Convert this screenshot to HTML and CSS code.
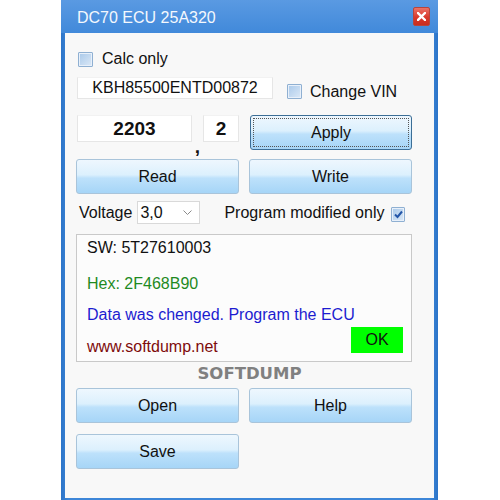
FILE: index.html
```html
<!DOCTYPE html>
<html lang="en">

<head>
    <meta charset="UTF-8">
    <meta name="viewport" content="width=device-width, initial-scale=1.0">
    <title>DC70 ECU 25A320</title>
    <link rel="stylesheet" href="styles.css">
</head>

<body>
    <div class="window">
        <div class="titlebar">
            <span class="title">DC70 ECU 25A320</span>
            <span class="close">
                <svg width="9" height="9" viewBox="0 0 9 9">
                    <path d="M1 1 L8 8 M8 1 L1 8" stroke="#fff" stroke-width="2.4" stroke-linecap="square" />
                </svg>
            </span>
        </div>

        <div class="client">
            <div class="row row-calc">
                <span class="check"></span>
                <span>Calc only</span>
            </div>

            <div class="row row-vin">
                <div class="field field-vin">KBH85500ENTD00872</div>
                <div class="vin-check">
                    <span class="check"></span>
                    <span>Change VIN</span>
                </div>
            </div>

            <div class="row row-code">
                <div class="field field-code">2203</div>
                <span class="comma">,</span>
                <div class="field field-sub">2</div>
                <button class="btn btn-apply">Apply</button>
            </div>

            <div class="row row-btns">
                <button class="btn">Read</button>
                <button class="btn">Write</button>
            </div>

            <div class="row row-volt">
                <span class="volt-label">Voltage</span>
                <div class="combo">
                    <span>3,0</span>
                    <svg width="9" height="5" viewBox="0 0 9 5">
                        <path d="M0.5 0.5 L4.5 4.5 L8.5 0.5" fill="none" stroke="#8a8a8a" stroke-width="1" />
                    </svg>
                </div>
                <span class="mod-label">Program modified only</span>
                <span class="check checked">
                    <svg width="11" height="11" viewBox="0 0 11 11">
                        <path d="M2 5.5 L4.5 8 L9 2.5" fill="none" stroke="#2456a8" stroke-width="2" />
                    </svg>
                </span>
            </div>

            <div class="info">
                <div class="line line-sw">SW: 5T27610003</div>
                <div class="line line-hex">Hex: 2F468B90</div>
                <div class="line line-msg">Data was chenged. Program the ECU</div>
                <div class="line-last">
                    <span class="site">www.softdump.net</span>
                    <span class="ok">OK</span>
                </div>
            </div>

            <div class="brand">SOFTDUMP</div>

            <div class="row row-btns row-open">
                <button class="btn">Open</button>
                <button class="btn">Help</button>
            </div>

            <div class="row row-btns row-save">
                <button class="btn">Save</button>
            </div>
        </div>
    </div>
</body>

</html>
```

FILE: styles.css
```css
body {
    margin: 0;
    background-color: #FFF;
    font-family: "Liberation Sans", Arial, sans-serif;
    font-size: 16px;
    color: #111;
}

.window {
    margin-left: 61px;
    width: 377px;
    height: 500px;
    display: flex;
    flex-direction: column;
    background: linear-gradient(to right, #2c74c8, #3d86d8 2%, #3d86d8 98%, #2c74c8);
}

.titlebar {
    height: 33px;
    display: flex;
    align-items: center;
    justify-content: space-between;
    padding: 0 8px 0 16px;
    background: linear-gradient(#5a9ae2, #4189da);
}

.title {
    color: #F4F8FD;
    font-size: 16px;
    padding-top: 2px;
}

.close {
    width: 17px;
    height: 19px;
    display: flex;
    align-items: center;
    justify-content: center;
    border-radius: 2px;
    border: 1px solid #b8453c;
    box-sizing: border-box;
    background: linear-gradient(#eb7367, #d8392b 55%, #c92d20);
}

.client {
    flex: 1;
    margin: 0 4px 2px 4px;
    padding-left: 11px;
    background-color: #F8F8F8;
}

.row {
    display: flex;
    align-items: center;
}

.check {
    width: 15px;
    height: 15px;
    box-sizing: border-box;
    border: 1px solid #8fb0d2;
    border-radius: 1px;
    background: linear-gradient(135deg, #a9c9ea, #dce9f7);
    box-shadow: inset 0 0 0 1px #e8f0fa;
    display: inline-flex;
    align-items: center;
    justify-content: center;
    flex-shrink: 0;
}

.row-calc {
    margin-top: 15px;
    height: 22px;
    gap: 9px;
    padding-left: 2px;
}

.row-vin {
    margin-top: 7px;
    height: 22px;
}

.field {
    background-color: #FFF;
    border: 1px solid #E6E6E6;
    border-top-color: #F2F2F2;
    box-sizing: border-box;
    display: flex;
    align-items: center;
    justify-content: center;
}

.field-vin {
    margin-left: 1px;
    width: 196px;
    height: 22px;
}

.vin-check {
    display: flex;
    align-items: center;
    gap: 8px;
    margin-left: 14px;
    margin-top: 7px;
}

.row-code {
    margin-top: 16px;
    height: 35px;
    align-items: flex-start;
}

.field-code,
.field-sub {
    height: 27px;
    font-weight: bold;
    font-size: 19px;
}

.field-code {
    margin-left: 1px;
    width: 115px;
}

.field-sub {
    width: 36px;
}

.comma {
    width: 11px;
    font-weight: bold;
    font-size: 19px;
    line-height: 19px;
    margin-top: 22px;
    text-align: center;
}

.btn {
    font: inherit;
    color: #111;
    width: 163px;
    height: 35px;
    padding: 0;
    border: 1px solid #a9c4da;
    border-radius: 3px;
    background: linear-gradient(#eef7fe, #dcf0fd 45%, #bde1fb 55%, #a6d5f7);
    cursor: pointer;
}

.btn-apply {
    margin-left: 11px;
    width: 162px;
    border-color: #3c6e96;
    outline: 1px dotted #555;
    outline-offset: -4px;
}

.row-btns {
    gap: 10px;
}

.row-btns:nth-child(4) {
    margin-top: 9px;
}

.row-volt {
    margin-top: 7px;
    height: 23px;
}

.volt-label {
    margin-left: 3px;
}

.combo {
    margin-left: 5px;
    width: 63px;
    height: 23px;
    box-sizing: border-box;
    border: 1px solid #d9d9d9;
    background-color: #FFF;
    display: flex;
    align-items: center;
    justify-content: space-between;
    padding: 0 7px 0 2px;
}

.mod-label {
    margin-left: 24px;
}

.check.checked {
    margin-left: 7px;
    width: 14px;
    height: 15px;
    margin-top: 4px;
}

.info {
    margin-top: 10px;
    width: 336px;
    height: 128px;
    box-sizing: border-box;
    border: 1px solid #c9c9c9;
    background-color: #FCFCFC;
    padding: 2px 8px 0 10px;
}

.line {
    height: 22px;
    line-height: 22px;
}

.line-hex {
    margin-top: 14px;
    color: #1f8a1f;
}

.line-msg {
    margin-top: 9px;
    color: #1c1cd0;
}

.line-last {
    margin-top: 1px;
    display: flex;
    justify-content: space-between;
    align-items: flex-start;
}

.site {
    margin-top: 9px;
    line-height: 22px;
    color: #7e0b0b;
}

.ok {
    width: 52px;
    height: 26px;
    display: flex;
    align-items: center;
    justify-content: center;
    background-color: #00FF00;
    color: #111;
}

.brand {
    margin-top: 2px;
    height: 20px;
    line-height: 20px;
    padding-right: 11px;
    text-align: center;
    font-family: "DejaVu Sans", sans-serif;
    font-weight: bold;
    font-size: 16.5px;
    color: #808080;
}

.row-open {
    margin-top: 4px;
}

.row-save {
    margin-top: 11px;
}
```
